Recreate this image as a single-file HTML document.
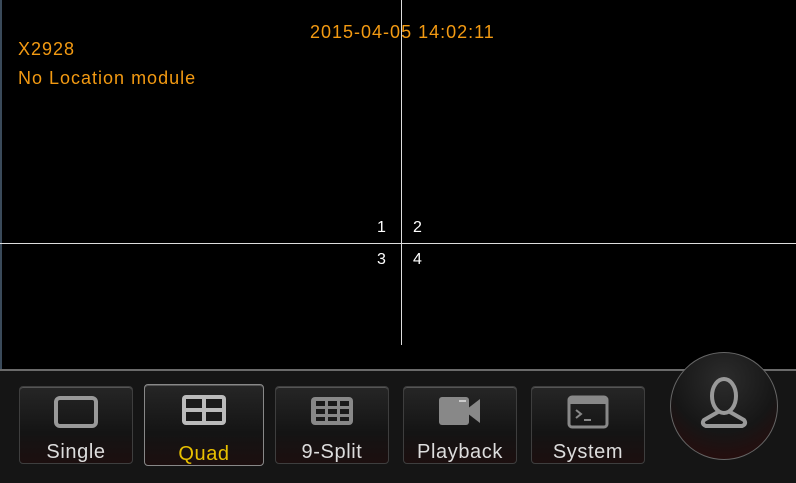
<!DOCTYPE html>
<html><head><meta charset="utf-8"><style>
*{margin:0;padding:0;box-sizing:border-box}
body{width:796px;height:483px;background:#000;overflow:hidden;position:relative;font-family:"Liberation Sans","DejaVu Sans",sans-serif}
.o{color:#f39a12;font-size:18px;position:absolute;white-space:nowrap;letter-spacing:1px}
.w{color:#fff;font-size:16px;position:absolute}
.bar{position:absolute;left:0;top:369px;width:796px;height:114px;background:#151515;border-top:2px solid #6a6a6a}
.btn{position:absolute;top:386px;width:114px;height:78px;border:1px solid #3e3e3e;border-radius:4px;background:linear-gradient(#262626,#141414 60%,#1c0f0f);box-shadow:inset 0 1px 0 #555}
.btn span{position:absolute;left:0;right:0;bottom:-1px;text-align:center;color:#ddd;font-size:20px;letter-spacing:.6px}
.btn svg{position:absolute;left:50%;top:8px;transform:translateX(-50%)}
</style></head><body>
<div style="position:absolute;left:0;top:0;width:2px;height:483px;background:#3a4a5a"></div>
<div style="position:absolute;left:0;bottom:0;width:796px;height:2px;background:#3a4a5a"></div>
<div class="o" style="left:310px;top:22px">2015-04-05 14:02:11</div>
<div class="o" style="left:18px;top:39px">X2928</div>
<div class="o" style="left:18px;top:68px">No Location module</div>
<div style="position:absolute;left:401px;top:0;width:1px;height:345px;background:#ddd"></div>
<div style="position:absolute;left:0;top:243px;width:796px;height:1px;background:#ddd"></div>
<div class="w" style="left:377px;top:219px">1</div>
<div class="w" style="left:413px;top:219px">2</div>
<div class="w" style="left:377px;top:251px">3</div>
<div class="w" style="left:413px;top:251px">4</div>
<div class="bar"></div>
<div class="btn" style="left:19px"><svg width="46" height="34"><rect x="3" y="3" width="40" height="28" rx="4" fill="none" stroke="#999" stroke-width="4"/></svg><span>Single</span></div>
<div class="btn" style="left:144px;top:384px;width:120px;height:82px;border-color:#888"><svg width="48" height="34"><rect x="2" y="2" width="44" height="30" rx="4" fill="#bbb"/><rect x="6" y="6" width="16" height="9" fill="#1a1a1a"/><rect x="26" y="6" width="16" height="9" fill="#1a1a1a"/><rect x="6" y="19" width="16" height="9" fill="#1a1a1a"/><rect x="26" y="19" width="16" height="9" fill="#1a1a1a"/></svg><span style="color:#e8c000">Quad</span></div>
<div class="btn" style="left:275px"><svg width="46" height="32"><rect x="2" y="2" width="42" height="28" rx="4" fill="#888"/><g fill="#1a1a1a"><rect x="7" y="6" width="9" height="5"/><rect x="19" y="6" width="9" height="5"/><rect x="31" y="6" width="9" height="5"/><rect x="7" y="14" width="9" height="5"/><rect x="19" y="14" width="9" height="5"/><rect x="31" y="14" width="9" height="5"/><rect x="7" y="22" width="9" height="4"/><rect x="19" y="22" width="9" height="4"/><rect x="31" y="22" width="9" height="4"/></g></svg><span>9-Split</span></div>
<div class="btn" style="left:403px"><svg width="46" height="32"><rect x="2" y="2" width="30" height="28" rx="3" fill="#888"/><path d="M30 14 L43 4 L43 28 L30 18Z" fill="#888"/><rect x="22" y="5" width="7" height="2" fill="#ccc"/></svg><span>Playback</span></div>
<div class="btn" style="left:531px"><svg width="42" height="34"><rect x="2" y="2" width="38" height="30" rx="3" fill="none" stroke="#888" stroke-width="3"/><rect x="2" y="2" width="38" height="7" fill="#888"/><path d="M9 15 L14 19 L9 23" fill="none" stroke="#888" stroke-width="2"/><path d="M17 25 H24" stroke="#888" stroke-width="2"/></svg><span>System</span></div>
<div style="position:absolute;left:670px;top:352px;width:108px;height:108px;border-radius:50%;border:1px solid #666;background:radial-gradient(circle at 50% 25%,#2c2c2c,#161616 55%,#2e0909)"></div>
<svg style="position:absolute;left:698px;top:376px" width="54" height="56"><ellipse cx="26" cy="20" rx="12" ry="17" fill="none" stroke="#999" stroke-width="4"/><path d="M20 36 L6 44 Q3 48 8 50 H44 Q49 48 46 44 L32 36" fill="none" stroke="#999" stroke-width="4" stroke-linejoin="round"/></svg>
</body></html>
